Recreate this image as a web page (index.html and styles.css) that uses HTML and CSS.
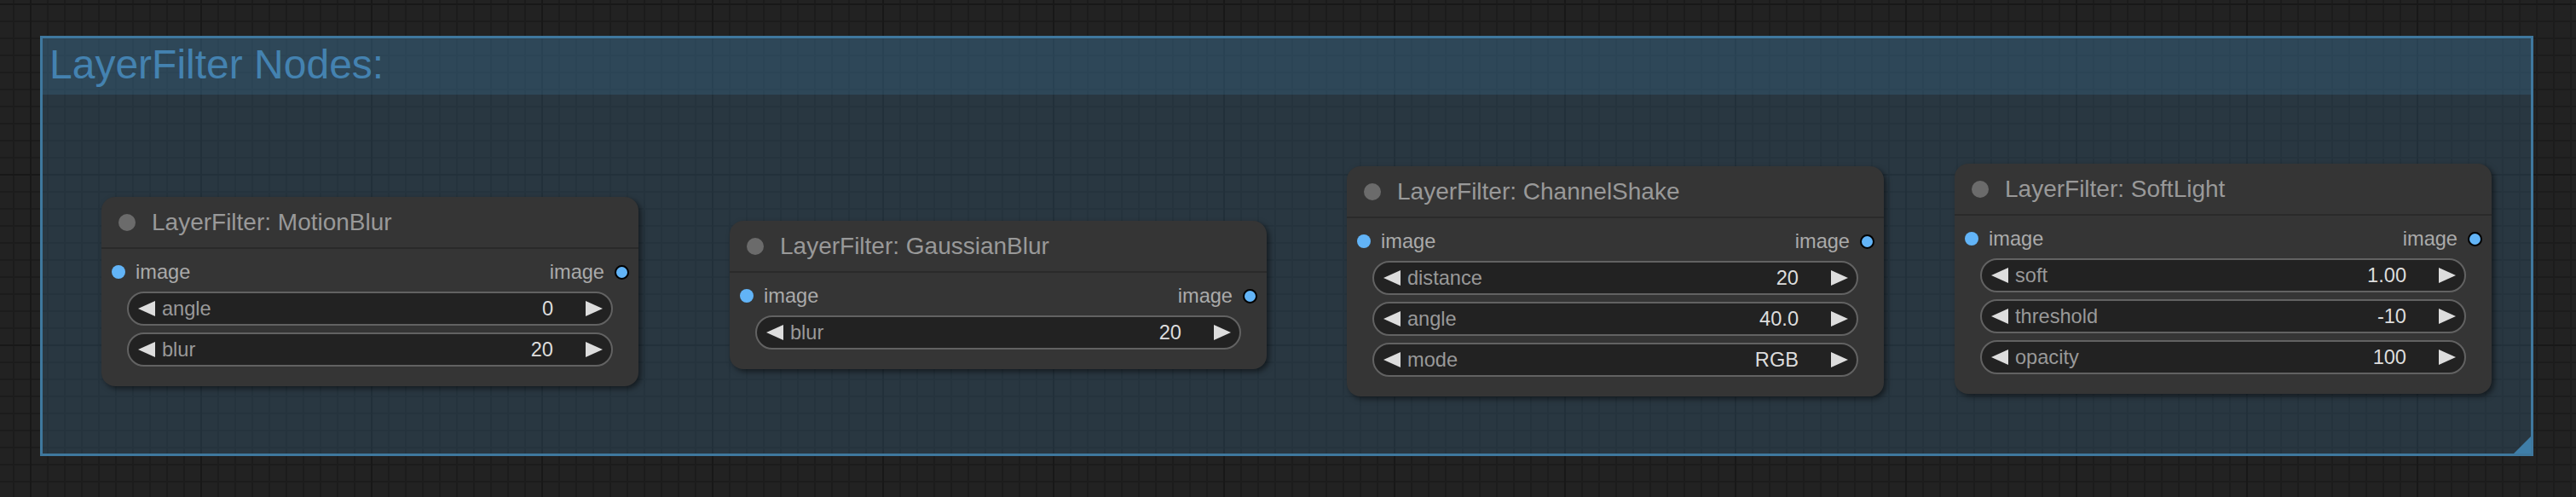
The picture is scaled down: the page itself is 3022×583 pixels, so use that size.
FILE: index.html
```html
<!DOCTYPE html>
<html>
<head>
<meta charset="utf-8">
<title>LayerFilter Nodes</title>
<link rel="stylesheet" href="styles.css">
</head>
<body>
<div class="canvas">
  <div class="group">
    <div class="group-title">LayerFilter Nodes:</div>
    <div class="group-resize"></div>
  </div>

  <div class="node n1">
    <div class="node-title"><span class="title-dot"></span>LayerFilter: MotionBlur</div>
    <div class="node-body">
      <div class="slots">
        <div class="slot-in"><span class="dot-in"></span>image</div>
        <div class="slot-out">image<span class="dot-out"></span></div>
      </div>
      <div class="widget"><svg class="arrow" viewBox="0 0 20 18"><polygon points="20,0 20,18 0,9"/></svg><span class="w-label">angle</span><span class="w-value">0</span><svg class="arrow" viewBox="0 0 20 18"><polygon points="0,0 20,9 0,18"/></svg></div>
      <div class="widget"><svg class="arrow" viewBox="0 0 20 18"><polygon points="20,0 20,18 0,9"/></svg><span class="w-label">blur</span><span class="w-value">20</span><svg class="arrow" viewBox="0 0 20 18"><polygon points="0,0 20,9 0,18"/></svg></div>
    </div>
  </div>

  <div class="node n2">
    <div class="node-title"><span class="title-dot"></span>LayerFilter: GaussianBlur</div>
    <div class="node-body">
      <div class="slots">
        <div class="slot-in"><span class="dot-in"></span>image</div>
        <div class="slot-out">image<span class="dot-out"></span></div>
      </div>
      <div class="widget"><svg class="arrow" viewBox="0 0 20 18"><polygon points="20,0 20,18 0,9"/></svg><span class="w-label">blur</span><span class="w-value">20</span><svg class="arrow" viewBox="0 0 20 18"><polygon points="0,0 20,9 0,18"/></svg></div>
    </div>
  </div>

  <div class="node n3">
    <div class="node-title"><span class="title-dot"></span>LayerFilter: ChannelShake</div>
    <div class="node-body">
      <div class="slots">
        <div class="slot-in"><span class="dot-in"></span>image</div>
        <div class="slot-out">image<span class="dot-out"></span></div>
      </div>
      <div class="widget"><svg class="arrow" viewBox="0 0 20 18"><polygon points="20,0 20,18 0,9"/></svg><span class="w-label">distance</span><span class="w-value">20</span><svg class="arrow" viewBox="0 0 20 18"><polygon points="0,0 20,9 0,18"/></svg></div>
      <div class="widget"><svg class="arrow" viewBox="0 0 20 18"><polygon points="20,0 20,18 0,9"/></svg><span class="w-label">angle</span><span class="w-value">40.0</span><svg class="arrow" viewBox="0 0 20 18"><polygon points="0,0 20,9 0,18"/></svg></div>
      <div class="widget"><svg class="arrow" viewBox="0 0 20 18"><polygon points="20,0 20,18 0,9"/></svg><span class="w-label">mode</span><span class="w-value">RGB</span><svg class="arrow" viewBox="0 0 20 18"><polygon points="0,0 20,9 0,18"/></svg></div>
    </div>
  </div>

  <div class="node n4">
    <div class="node-title"><span class="title-dot"></span>LayerFilter: SoftLight</div>
    <div class="node-body">
      <div class="slots">
        <div class="slot-in"><span class="dot-in"></span>image</div>
        <div class="slot-out">image<span class="dot-out"></span></div>
      </div>
      <div class="widget"><svg class="arrow" viewBox="0 0 20 18"><polygon points="20,0 20,18 0,9"/></svg><span class="w-label">soft</span><span class="w-value">1.00</span><svg class="arrow" viewBox="0 0 20 18"><polygon points="0,0 20,9 0,18"/></svg></div>
      <div class="widget"><svg class="arrow" viewBox="0 0 20 18"><polygon points="20,0 20,18 0,9"/></svg><span class="w-label">threshold</span><span class="w-value">-10</span><svg class="arrow" viewBox="0 0 20 18"><polygon points="0,0 20,9 0,18"/></svg></div>
      <div class="widget"><svg class="arrow" viewBox="0 0 20 18"><polygon points="20,0 20,18 0,9"/></svg><span class="w-label">opacity</span><span class="w-value">100</span><svg class="arrow" viewBox="0 0 20 18"><polygon points="0,0 20,9 0,18"/></svg></div>
    </div>
  </div>
</div>
</body>
</html>
```

FILE: styles.css
```css
html, body {
  margin: 0;
  padding: 0;
}

body {
  width: 3022px;
  height: 583px;
  overflow: hidden;
  background-color: #222222;
  font-family: "Liberation Sans", Arial, sans-serif;
}

.canvas {
  position: relative;
  width: 3022px;
  height: 583px;
  background-color: #222222;
  background-image:
    linear-gradient(90deg, #181818 2px, transparent 2px),
    linear-gradient(180deg, #181818 2px, transparent 2px),
    linear-gradient(90deg, #1c1c1c 2px, transparent 2px),
    linear-gradient(180deg, #1c1c1c 2px, transparent 2px);
  background-size: 200px 200px, 200px 200px, 20px 20px, 20px 20px;
  background-position: 35px 0, 0 4px, 15px 0, 0 4px;
}

/* ---------- group ---------- */
.group {
  position: absolute;
  left: 47px;
  top: 42px;
  width: 2925px;
  height: 493px;
  box-sizing: border-box;
  border: 3px solid #3f789e;
  background: rgba(63, 120, 158, 0.25);
}

.group-title {
  height: 66px;
  line-height: 62px;
  padding-left: 8px;
  background: rgba(63, 120, 158, 0.25);
  color: #4482b0;
  font-size: 48px;
  white-space: nowrap;
}

.group-resize {
  position: absolute;
  right: 0;
  bottom: 0;
  width: 20px;
  height: 20px;
  background: #3f7ea8;
  clip-path: polygon(100% 0, 100% 100%, 0 100%);
}

/* ---------- nodes ---------- */
.node {
  position: absolute;
  width: 630px;
  background: #353535;
  border-radius: 16px;
  box-shadow: 3px 3px 6px rgba(0, 0, 0, 0.5);
}

.n1 { left: 119px; top: 231px; }
.n2 { left: 856px; top: 259px; }
.n3 { left: 1580px; top: 195px; }
.n4 { left: 2293px; top: 192px; }

.node-title {
  display: flex;
  align-items: center;
  height: 59px;
  line-height: 59px;
  padding-left: 20px;
  border-bottom: 2px solid #2a2a2a;
  color: #999999;
  font-size: 28px;
  white-space: nowrap;
}

.title-dot {
  width: 20px;
  height: 20px;
  border-radius: 50%;
  background: #6b6b6b;
  margin-right: 19px;
  flex: none;
}

.node-body {
  padding: 7px 0 23px;
}

.slots {
  display: flex;
  justify-content: space-between;
  align-items: center;
  height: 40px;
  margin-bottom: 3px;
  color: #aaaaaa;
  font-size: 23.6px;
}

.slot-in,
.slot-out {
  display: flex;
  align-items: center;
}

.dot-in {
  width: 16px;
  height: 16px;
  border-radius: 50%;
  background: #62b4f7;
  margin-left: 12px;
  margin-right: 12px;
}

.dot-out {
  width: 13px;
  height: 13px;
  border-radius: 50%;
  border: 2px solid #000000;
  background: #62b4f7;
  margin-left: 12px;
  margin-right: 11px;
}

.widget {
  display: flex;
  align-items: center;
  box-sizing: border-box;
  height: 40px;
  margin: 0 30px 8px;
  padding: 0 10px 0 11px;
  border: 2px solid #626262;
  border-radius: 20px;
  background: #222222;
  font-size: 23.6px;
}

.widget:last-child {
  margin-bottom: 0;
}

.arrow {
  width: 20px;
  height: 18px;
  flex: none;
  fill: #dddddd;
}

.w-label {
  flex: 1;
  margin-left: 8px;
  color: #999999;
  white-space: nowrap;
}

.w-value {
  margin-right: 38px;
  color: #dddddd;
  white-space: nowrap;
}
```
